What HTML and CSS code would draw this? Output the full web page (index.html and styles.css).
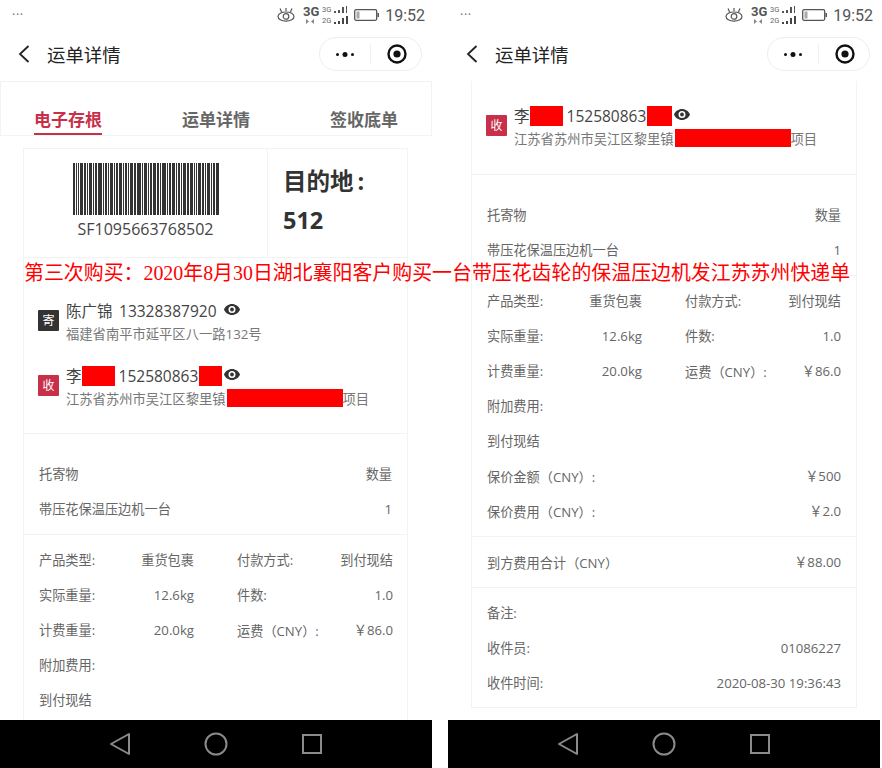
FILE: index.html
```html
<!DOCTYPE html>
<html lang="zh-CN">
<head>
<meta charset="utf-8">
<title>运单详情</title>
<link rel="stylesheet" href="styles.css">
</head>
<body>
<svg class="defs" aria-hidden="true">
  <symbol id="i-watch" viewBox="0 0 18 14">
    <ellipse cx="9" cy="8.600" rx="8" ry="4.600" fill="none" stroke="#555" stroke-width="1.200"/>
    <circle cx="9" cy="8.400" r="2.800" fill="none" stroke="#555" stroke-width="1.200"/>
    <path d="M3 0.500l1.600 3.500M9 0v3M15 0.500l-1.600 3.500" fill="none" stroke="#555" stroke-width="1.200"/>
  </symbol>
  <symbol id="i-signal" viewBox="0 0 46 24">
    <text x="0" y="13" class="sig-big">3G</text>
    <path d="M3 16l3 2.500-3 2.500zM11 16l-3 2.500 3 2.500z" fill="#888"/>
    <text x="19" y="9" class="sig-small">3G</text>
    <text x="19" y="20" class="sig-small">2G</text>
    <path d="M31 8h2v2h-2zM35 7h2v3h-2zM39 4h2v6h-2zM43 3h1v7h-1z" fill="#555"/>
    <path d="M31 19h2v2h-2zM35 18h2v3h-2zM39 15h2v6h-2zM43 13h2v8h-2z" fill="#444"/>
  </symbol>
  <symbol id="i-battery" viewBox="0 0 25 14">
    <rect x="0.700" y="1.700" width="22" height="10.600" rx="1.500" fill="none" stroke="#555" stroke-width="1.300"/>
    <rect x="2.500" y="3.500" width="3" height="7" fill="#aaa"/>
    <rect x="23.500" y="5" width="1.500" height="4" fill="#555"/>
  </symbol>
  <symbol id="i-eye" viewBox="0 0 16 11">
    <path fill-rule="evenodd" d="M8 0C4.400 0 1.300 2.300 0 5.500 1.300 8.700 4.400 11 8 11s6.700-2.300 8-5.500C14.700 2.300 11.600 0 8 0zM8 2a3.500 3.500 0 1 1 0 7 3.500 3.500 0 0 1 0-7zM8 3.600a1.900 1.900 0 1 0 0 3.800 1.900 1.900 0 0 0 0-3.800z" fill="#333"/>
  </symbol>
  <symbol id="i-barcode" viewBox="0 0 146 52">
    <path fill="#333" d="M0 0h2v52h-2zM3 0h1v52h-1zM5 0h1v52h-1zM7 0h3v52h-3zM11 0h2v52h-2zM14 0h1v52h-1zM16 0h3v52h-3zM20 0h1v52h-1zM22 0h2v52h-2zM25 0h4v52h-4zM30 0h1v52h-1zM32 0h2v52h-2zM35 0h1v52h-1zM37 0h3v52h-3zM41 0h1v52h-1zM43 0h2v52h-2zM46 0h3v52h-3zM50 0h1v52h-1zM52 0h2v52h-2zM55 0h1v52h-1zM57 0h3v52h-3zM61 0h2v52h-2zM64 0h4v52h-4zM69 0h1v52h-1zM71 0h3v52h-3zM75 0h1v52h-1zM77 0h2v52h-2zM80 0h3v52h-3zM84 0h2v52h-2zM87 0h1v52h-1zM89 0h4v52h-4zM94 0h1v52h-1zM96 0h2v52h-2zM99 0h3v52h-3zM103 0h1v52h-1zM105 0h2v52h-2zM108 0h1v52h-1zM110 0h3v52h-3zM114 0h2v52h-2zM117 0h3v52h-3zM121 0h1v52h-1zM123 0h1v52h-1zM125 0h3v52h-3zM129 0h2v52h-2zM132 0h1v52h-1zM134 0h3v52h-3zM138 0h1v52h-1zM140 0h2v52h-2zM143 0h3v52h-3z"/>
  </symbol>
  <symbol id="i-dots" viewBox="0 0 24 8">
    <circle cx="3" cy="4" r="1.800" fill="#111"/><circle cx="12" cy="4" r="3" fill="#111"/><circle cx="21" cy="4" r="1.800" fill="#111"/>
  </symbol>
  <symbol id="i-target" viewBox="0 0 20 20">
    <circle cx="10" cy="10" r="8.500" fill="none" stroke="#111" stroke-width="2.400"/><circle cx="10" cy="10" r="3.600" fill="#111"/>
  </symbol>
  <symbol id="i-back" viewBox="0 0 12 18">
    <path d="M10.500 1L2 9l8.500 8" fill="none" stroke="#222" stroke-width="1.800"/>
  </symbol>
  <symbol id="i-keys" viewBox="0 0 214 24">
    <path d="M20 2v20L2 12z" fill="none" stroke="#8a8a8a" stroke-width="2" stroke-linejoin="round"/>
    <circle cx="107" cy="12" r="10.500" fill="none" stroke="#8a8a8a" stroke-width="2"/>
    <rect x="194" y="3" width="18" height="18" fill="none" stroke="#8a8a8a" stroke-width="2"/>
  </symbol>
</svg>

<main class="page">
  <section class="phone">
    <div class="status">
      <span class="status-dots">···</span>
      <svg class="ic-watch"><use href="#i-watch"/></svg>
      <svg class="ic-signal"><use href="#i-signal"/></svg>
      <svg class="ic-battery"><use href="#i-battery"/></svg>
      <span class="clock">19:52</span>
    </div>
    <div class="nav">
      <svg class="ic-back"><use href="#i-back"/></svg>
      <h1 class="nav-title">运单详情</h1>
      <div class="capsule">
        <span class="capsule-cell"><svg class="ic-dots"><use href="#i-dots"/></svg></span>
        <span class="capsule-cell capsule-cell-last"><svg class="ic-target"><use href="#i-target"/></svg></span>
      </div>
    </div>
    <div class="content">
      <div class="tabs">
        <span class="tab tab-active">电子存根</span>
        <span class="tab">运单详情</span>
        <span class="tab">签收底单</span>
      </div>
      <div class="card">
        <div class="ticket">
          <div class="ticket-code">
            <svg class="barcode"><use href="#i-barcode"/></svg>
            <div class="waybill">SF1095663768502</div>
          </div>
          <div class="ticket-dest">
            <div class="dest-line">目的地<span class="dest-colon">:</span></div>
            <div class="dest-line">512</div>
          </div>
        </div>
        <div class="parties">
          <div class="party">
            <span class="badge">寄</span>
            <div class="party-text">
              <div class="party-name party-name-spaced">陈广锦 13328387920<svg class="ic-eye"><use href="#i-eye"/></svg></div>
              <div class="party-addr">福建省南平市延平区八一路132号</div>
            </div>
          </div>
          <div class="party">
            <span class="badge badge-red">收</span>
            <div class="party-text">
              <div class="party-name">李<span class="mask mask-name"></span> 152580863<span class="mask mask-phone"></span><svg class="ic-eye ic-eye-near"><use href="#i-eye"/></svg></div>
              <div class="party-addr">江苏省苏州市吴江区黎里镇<span class="mask-addr"></span>项目</div>
            </div>
          </div>
        </div>
        <div class="block block-goods">
          <div class="row"><span>托寄物</span><span>数量</span></div>
          <div class="row"><span>帯压花保温压边机一台</span><span>1</span></div>
        </div>
        <div class="block">
          <div class="pairs">
            <div class="row"><span>产品类型:</span><span>重货包裹</span></div>
            <div class="row"><span>付款方式:</span><span>到付现结</span></div>
            <div class="row"><span>实际重量:</span><span>12.6kg</span></div>
            <div class="row"><span>件数:</span><span>1.0</span></div>
            <div class="row"><span>计费重量:</span><span>20.0kg</span></div>
            <div class="row"><span>运费<span class="paren">（</span>CNY<span class="paren">）</span>:</span><span>￥86.0</span></div>
          </div>
          <div class="row"><span>附加费用:</span></div>
          <div class="row"><span>到付现结</span></div>
        </div>
      </div>
    </div>
    <div class="softkeys"><svg class="ic-keys"><use href="#i-keys"/></svg></div>
  </section>

  <section class="phone">
    <div class="status">
      <span class="status-dots">···</span>
      <svg class="ic-watch"><use href="#i-watch"/></svg>
      <svg class="ic-signal"><use href="#i-signal"/></svg>
      <svg class="ic-battery"><use href="#i-battery"/></svg>
      <span class="clock">19:52</span>
    </div>
    <div class="nav">
      <svg class="ic-back"><use href="#i-back"/></svg>
      <h1 class="nav-title">运单详情</h1>
      <div class="capsule">
        <span class="capsule-cell"><svg class="ic-dots"><use href="#i-dots"/></svg></span>
        <span class="capsule-cell capsule-cell-last"><svg class="ic-target"><use href="#i-target"/></svg></span>
      </div>
    </div>
    <div class="content">
      <div class="card card-scrolled">
        <div class="parties parties-top">
          <div class="party">
            <span class="badge badge-red">收</span>
            <div class="party-text">
              <div class="party-name">李<span class="mask mask-name"></span> 152580863<span class="mask mask-phone-wide"></span><svg class="ic-eye ic-eye-near"><use href="#i-eye"/></svg></div>
              <div class="party-addr">江苏省苏州市吴江区黎里镇<span class="mask-addr"></span>项目</div>
            </div>
          </div>
        </div>
        <div class="block block-goods">
          <div class="row"><span>托寄物</span><span>数量</span></div>
          <div class="row"><span>帯压花保温压边机一台</span><span>1</span></div>
        </div>
        <div class="block">
          <div class="pairs">
            <div class="row"><span>产品类型:</span><span>重货包裹</span></div>
            <div class="row"><span>付款方式:</span><span>到付现结</span></div>
            <div class="row"><span>实际重量:</span><span>12.6kg</span></div>
            <div class="row"><span>件数:</span><span>1.0</span></div>
            <div class="row"><span>计费重量:</span><span>20.0kg</span></div>
            <div class="row"><span>运费<span class="paren">（</span>CNY<span class="paren">）</span>:</span><span>￥86.0</span></div>
          </div>
          <div class="row"><span>附加费用:</span></div>
          <div class="row"><span>到付现结</span></div>
          <div class="row"><span>保价金额<span class="paren">（</span>CNY<span class="paren">）</span>:</span><span>￥500</span></div>
          <div class="row"><span>保价费用<span class="paren">（</span>CNY<span class="paren">）</span>:</span><span>￥2.0</span></div>
        </div>
        <div class="block">
          <div class="row"><span>到方费用合计<span class="paren">（</span>CNY<span class="paren">）</span></span><span>￥88.00</span></div>
        </div>
        <div class="block block-last">
          <div class="row"><span>备注:</span></div>
          <div class="row"><span>收件员:</span><span>01086227</span></div>
          <div class="row"><span>收件时间:</span><span>2020-08-30 19:36:43</span></div>
        </div>
      </div>
    </div>
    <div class="softkeys"><svg class="ic-keys"><use href="#i-keys"/></svg></div>
  </section>

  <p class="caption">第三次购买：2020年8月30日湖北襄阳客户购买一台带压花齿轮的保温压边机发江苏苏州快递单</p>
</main>
</body>
</html>
```

FILE: styles.css
```css
* { box-sizing: border-box; }

html, body {
  margin: 0;
  background: #fff;
}

body {
  font-family: "Open Sans", "Noto Sans CJK SC", sans-serif;
  color: #666;
}

.defs {
  display: none;
}

.page {
  position: relative;
  display: flex;
  gap: 16px;
  width: 882px;
  height: 768px;
  overflow: hidden;
}

.phone {
  display: flex;
  flex-direction: column;
  width: 432px;
  height: 768px;
}

/* status bar */
.status {
  display: flex;
  align-items: center;
  flex: none;
  height: 30px;
  padding: 0 7px 0 12px;
}

.status-dots {
  margin-top: -2px;
  margin-right: auto;
  color: #777;
  font-size: 13px;
  letter-spacing: 0.500px;
}

.ic-watch { width: 18px; height: 14px; }
.ic-signal { width: 46px; height: 24px; margin-left: 8px; }
.ic-battery { width: 25px; height: 14px; margin-left: 5px; }

.sig-big {
  font: 700 13px "Roboto", sans-serif;
  fill: #555;
}

.sig-small {
  font: 400 7.500px "Roboto", sans-serif;
  fill: #666;
}

.clock {
  margin-left: 6px;
  color: #555;
  font: 400 16px "Roboto", sans-serif;
}

/* nav */
.nav {
  display: flex;
  align-items: center;
  flex: none;
  height: 51px;
  padding: 0 10px 0 18px;
}

.ic-back { width: 12px; height: 18px; margin-top: -3px; }

.nav-title {
  flex: 1;
  margin: -3px 0 0 17px;
  color: #222;
  font-size: 18.400px;
  font-weight: 400;
}

.capsule {
  display: flex;
  align-items: center;
  width: 103px;
  height: 34px;
  margin-top: -3px;
  border: 1px solid #eee;
  border-radius: 17px;
}

.capsule-cell {
  display: flex;
  align-items: center;
  justify-content: center;
  width: 51px;
  height: 20px;
  border-right: 1px solid #efefef;
}

.capsule-cell-last {
  padding-left: 2px;
  border-right: 0;
}

.ic-dots { width: 20px; height: 7px; }
.ic-target { flex: none; width: 20px; height: 20px; }

/* content */
.content {
  flex: 1;
  min-height: 0;
  overflow: hidden;
}

.tabs {
  display: flex;
  justify-content: space-between;
  align-items: flex-end;
  height: 55px;
  padding: 0 33px;
  border: 1px solid #f3f3f3;
}

.tab {
  padding-bottom: 1px;
  border-bottom: 2px solid transparent;
  color: #666;
  font-size: 17px;
  font-weight: 700;
  line-height: 24px;
}

.tab-active {
  border-bottom-color: #c8304a;
  color: #c8304a;
}

.card {
  width: 385px;
  margin: 12px 0 0 23px;
  border: 1px solid #f3f3f3;
}

.card-scrolled {
  width: 386px;
  margin-top: 0;
  border-top: 0;
}

.ticket {
  display: flex;
  height: 109px;
  border-bottom: 1px solid #f3f3f3;
}

.ticket-code {
  display: flex;
  flex-direction: column;
  align-items: center;
  width: 244px;
  padding-top: 14px;
  border-right: 1px solid #f3f3f3;
}

.barcode { width: 146px; height: 52px; flex: none; }

.waybill {
  margin-top: 2px;
  color: #444;
  font-size: 16px;
  line-height: 24px;
}

.ticket-dest {
  padding: 13px 0 0 15px;
}

.dest-line {
  color: #333;
  font-size: 23.500px;
  font-weight: 700;
  line-height: 39px;
}

.dest-colon {
  margin-left: 4px;
}

.parties {
  display: flex;
  flex-direction: column;
  gap: 20px;
  padding: 41px 15px 24px 14px;
  border-bottom: 1px solid #f3f3f3;
}

.parties-top {
  padding-top: 23px;
  padding-bottom: 25px;
}

.party {
  display: flex;
  align-items: center;
  gap: 7px;
}

.badge {
  display: flex;
  align-items: center;
  justify-content: center;
  flex: none;
  width: 21px;
  height: 21px;
  margin-top: -3px;
  border-radius: 1px;
  background: #333;
  color: #fff;
  font-size: 12px;
}

.badge-red { background: #c8304a; }

.party-name {
  display: flex;
  align-items: center;
  height: 23px;
  color: #444;
  font-size: 15.500px;
  white-space: pre;
}

.party-name-spaced {
  word-spacing: 2.500px;
}

.party-addr {
  display: flex;
  align-items: center;
  height: 22px;
  color: #777;
  font-size: 13.300px;
}

.mask {
  flex: none;
  height: 20px;
  background: #f00;
}

.mask-name { width: 33px; }
.mask-phone { width: 23px; margin-left: 1px; }
.mask-phone-wide { width: 25px; margin-left: 1px; }

.mask-addr {
  flex: none;
  width: 116px;
  height: 18px;
  margin-left: 1px;
  background: #f00;
}

.ic-eye {
  flex: none;
  width: 16px;
  height: 11px;
  margin: -2px 0 0 7px;
}

.ic-eye-near { margin-left: 2px; }

.block {
  padding: 8px 15px 7px;
  border-bottom: 1px solid #f3f3f3;
}

.block-goods { padding-top: 23px; }

.block-last {
  padding-bottom: 6px;
  border-bottom: 0;
}

.pairs {
  display: grid;
  grid-template-columns: 155px 156px;
  column-gap: 43px;
}

.row {
  display: flex;
  justify-content: space-between;
  height: 35px;
  color: #666;
  font-size: 13.200px;
  line-height: 35px;
  white-space: nowrap;
}

.paren {
  font-family: "Noto Sans CJK TC", sans-serif;
}

/* system keys */
.softkeys {
  display: flex;
  align-items: center;
  flex: none;
  height: 48px;
  padding-left: 109px;
  background: #000;
}

.ic-keys { width: 214px; height: 24px; }

/* caption drawn over the two screenshots */
.caption {
  position: absolute;
  left: 24px;
  top: 259px;
  margin: 0;
  color: #f00;
  font-family: "Liberation Serif", "Noto Sans CJK SC", serif;
  font-size: 19.920px;
  line-height: 28px;
  white-space: nowrap;
}
```
